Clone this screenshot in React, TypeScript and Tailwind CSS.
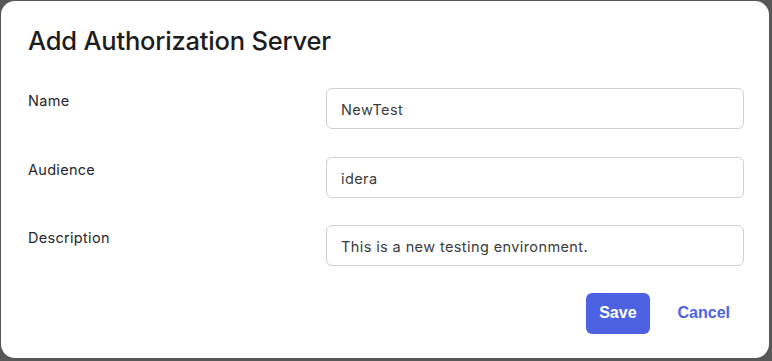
import React from "react";

const rows = [
  { label: "Name", value: "NewTest" },
  { label: "Audience", value: "idera" },
  { label: "Description", value: "This is a new testing environment." },
];

export default function App() {
  return (
    <div className="w-[772px] h-[361px] bg-[#575757] pl-px pt-px overflow-hidden">
      <div className="w-[768px] h-[357px] bg-white rounded-[14px] pl-[27px] pr-[25px] pt-[24px] flex flex-col" style={{ fontFamily: "Inter, 'Noto Sans', sans-serif" }}>
        <h1 className="text-[25.5px] leading-[32px] text-[#1d1d21] font-medium tracking-[-0.2px]">Add Authorization Server</h1>
        <div className="mt-[31px] flex flex-col gap-[27.5px]">
          {rows.map((r) => (
            <div key={r.label} className="flex items-start">
              <div className="w-[298px] mt-[3px] text-[14.5px] leading-[20px] tracking-[0.3px] text-[#26262b]">{r.label}</div>
              <input
                readOnly
                value={r.value}
                className="w-[418px] h-[41px] border border-[#cfcfcf] rounded-[6px] px-[14px] pt-[2px] text-[14.5px] tracking-[0.4px] text-[#3b3b3b] outline-none bg-white"
                style={{ fontFamily: "Inter, 'Noto Sans', sans-serif" }}
              />
            </div>
          ))}
        </div>
        <div className="mt-[26.5px] flex justify-end gap-[14px]" style={{ fontFamily: "'Liberation Sans', Arial, sans-serif" }}>
          <button className="h-[41px] px-[13px] rounded-[6px] bg-[#4d62e3] text-white font-bold text-[16px]">Save</button>
          <button className="h-[41px] px-[14px] rounded-[6px] text-[#4d62e3] font-bold text-[16px]">Cancel</button>
        </div>
      </div>
    </div>
  );
}
